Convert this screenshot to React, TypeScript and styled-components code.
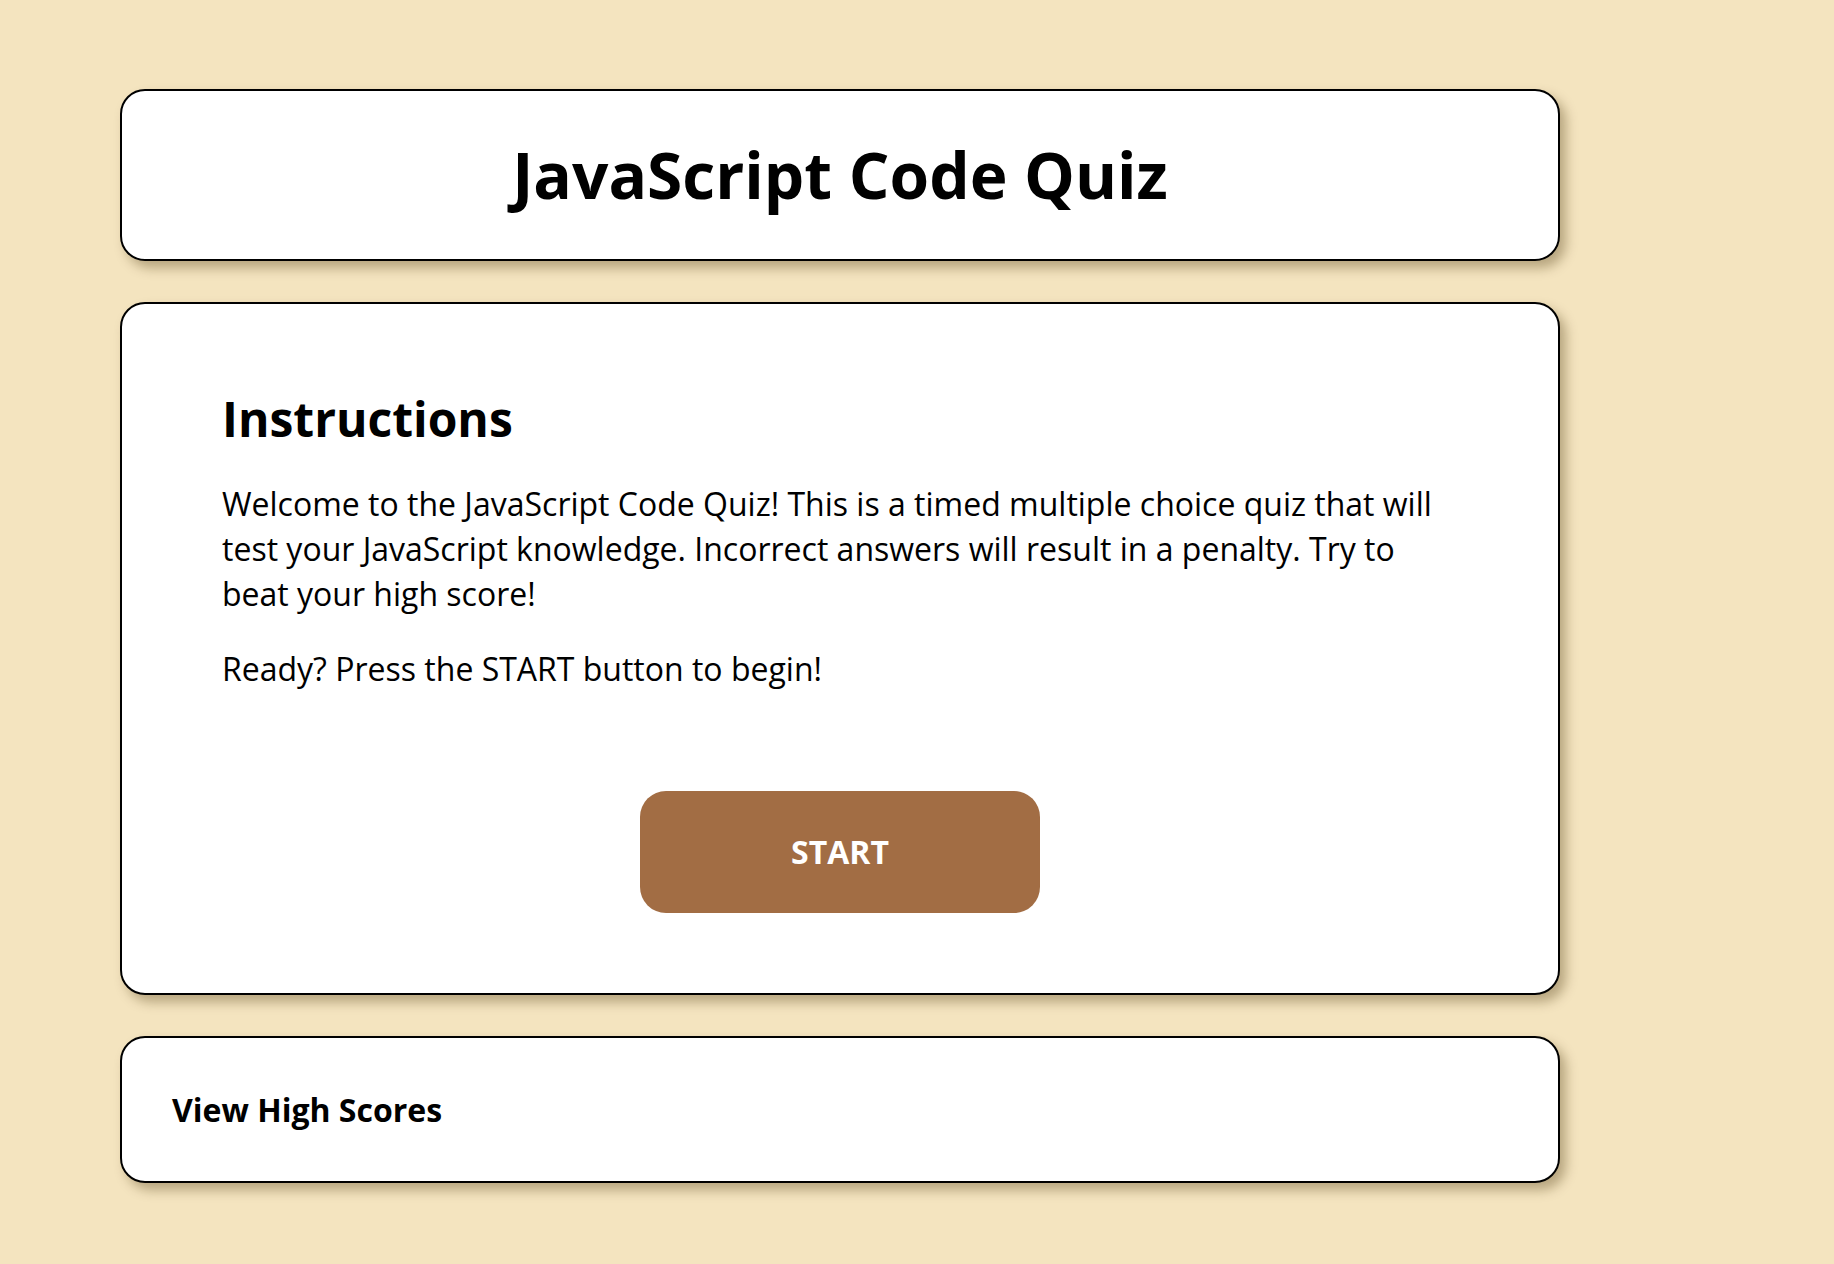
import styled, { createGlobalStyle } from 'styled-components';
import { FC } from 'react';

const GlobalStyle = createGlobalStyle`
  html, body {
    margin: 0;
    padding: 0;
    background-color: #f4e4bf;
    font-family: 'Open Sans', 'Noto Sans', sans-serif;
    color: #000;
  }

  * {
    box-sizing: border-box;
  }
`;

const Page = styled.main`
  display: flex;
  flex-direction: column;
  gap: 41px;
  width: 1440px;
  padding: 89px 0 80px;
  margin-left: 120px;
`;

const Card = styled.section`
  background: #fff;
  border: 2px solid #000;
  border-radius: 25px;
  box-shadow: 6px 7px 12px rgba(70, 50, 10, 0.35);
`;

const Header = styled(Card)`
  display: flex;
  align-items: center;
  justify-content: center;
  height: 172px;
`;

const Title = styled.h1`
  margin: 0;
  font-size: 64px;
  font-weight: 700;
  line-height: 1.2;
`;

const Main = styled(Card)`
  display: flex;
  flex-direction: column;
  padding: 44px 100px 80px;
`;

const Heading = styled.h2`
  margin: 42px 0 33px;
  font-size: 48px;
  font-weight: 700;
  line-height: 1.2;
`;

const Text = styled.p`
  margin: 0 0 30px;
  font-size: 32px;
  line-height: 45px;
`;

const StartButton = styled.button`
  align-self: center;
  width: 400px;
  height: 122px;
  margin-top: 70px;
  border: none;
  border-radius: 26px;
  background-color: #a26d44;
  color: #fff;
  font-family: inherit;
  font-size: 32px;
  font-weight: 700;
  cursor: pointer;
`;

const Footer = styled(Card)`
  display: flex;
  align-items: center;
  height: 147px;
  padding: 0 50px;
`;

const ScoresLink = styled.a`
  font-size: 32px;
  font-weight: 700;
  color: #000;
  text-decoration: none;
  cursor: pointer;
`;

const App: FC = () => {
  return (
    <>
      <GlobalStyle />
      <Page>
        <Header>
          <Title>JavaScript Code Quiz</Title>
        </Header>
        <Main>
          <Heading>Instructions</Heading>
          <Text>
            Welcome to the JavaScript Code Quiz! This is a timed multiple choice quiz that
            will test your JavaScript knowledge. Incorrect answers will result in a penalty.
            Try to beat your high score!
          </Text>
          <Text>Ready? Press the START button to begin!</Text>
          <StartButton>START</StartButton>
        </Main>
        <Footer>
          <ScoresLink>View High Scores</ScoresLink>
        </Footer>
      </Page>
    </>
  );
};

export default App;
